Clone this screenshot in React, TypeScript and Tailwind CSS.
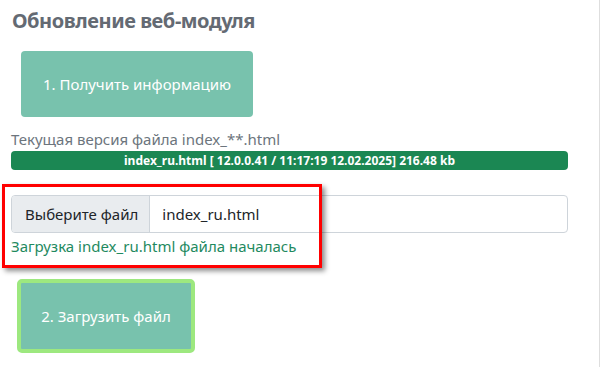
export default function App() {
  return (
    <div
      className="relative h-[367px] w-[601px] overflow-hidden bg-white"
      style={{ fontFamily: '"Noto Sans", "Open Sans", sans-serif' }}
    >
      <div className="absolute right-[1px] top-0 h-full w-px bg-[#dedede]" />

      <div className="w-[568px] pl-[11px]">
        <h2 className="pl-px pt-[8px] text-[20px] font-bold leading-[26px] tracking-[-0.45px] text-[#646a73]">
          Обновление веб-модуля
        </h2>

        <button className="ml-[10px] mt-[17px] flex h-[66px] w-[232px] items-center justify-center rounded-[4px] bg-[#78c2ad] text-[15px] text-white">
          1. Получить информацию
        </button>

        <div className="mt-[12px] text-[15px] leading-[20px] text-[#6c757d]">
          Текущая версия файла index_**.html
        </div>

        <div className="mt-[2px] flex h-[19px] items-center justify-center rounded-[4px] bg-[#1b8753] text-[12px] font-bold text-white">
          index_ru.html [ 12.0.0.41 / 11:17:19 12.02.2025] 216.48 kb
        </div>

        <div className="mt-[25px] flex h-[38px] overflow-hidden rounded-[4px] border border-[#ced4da] text-[15px] text-[#212529]">
          <div className="flex items-center border-r border-[#ced4da] bg-[#e9ecef] pl-[13px] pr-[11px]">
            Выберите файл
          </div>
          <div className="flex items-center pl-[12px]">index_ru.html</div>
        </div>

        <div className="mt-[2px] text-[15px] leading-[22px] text-[#1f8a5f]">
          Загрузка index_ru.html файла началась
        </div>

        <button className="ml-[6px] mt-[22px] flex h-[74px] w-[178px] items-center justify-center rounded-[5px] border-[4px] border-[#9de87f] bg-[#78c2ad] text-[15px] text-white">
          2. Загрузить файл
        </button>
      </div>

      {/* annotation frame */}
      <div className="absolute left-[2px] top-[184px] h-[84px] w-[320px] border-[3.5px] border-[#ff0000] shadow-[3px_3px_5px_rgba(0,0,0,0.45)]" />
    </div>
  );
}
